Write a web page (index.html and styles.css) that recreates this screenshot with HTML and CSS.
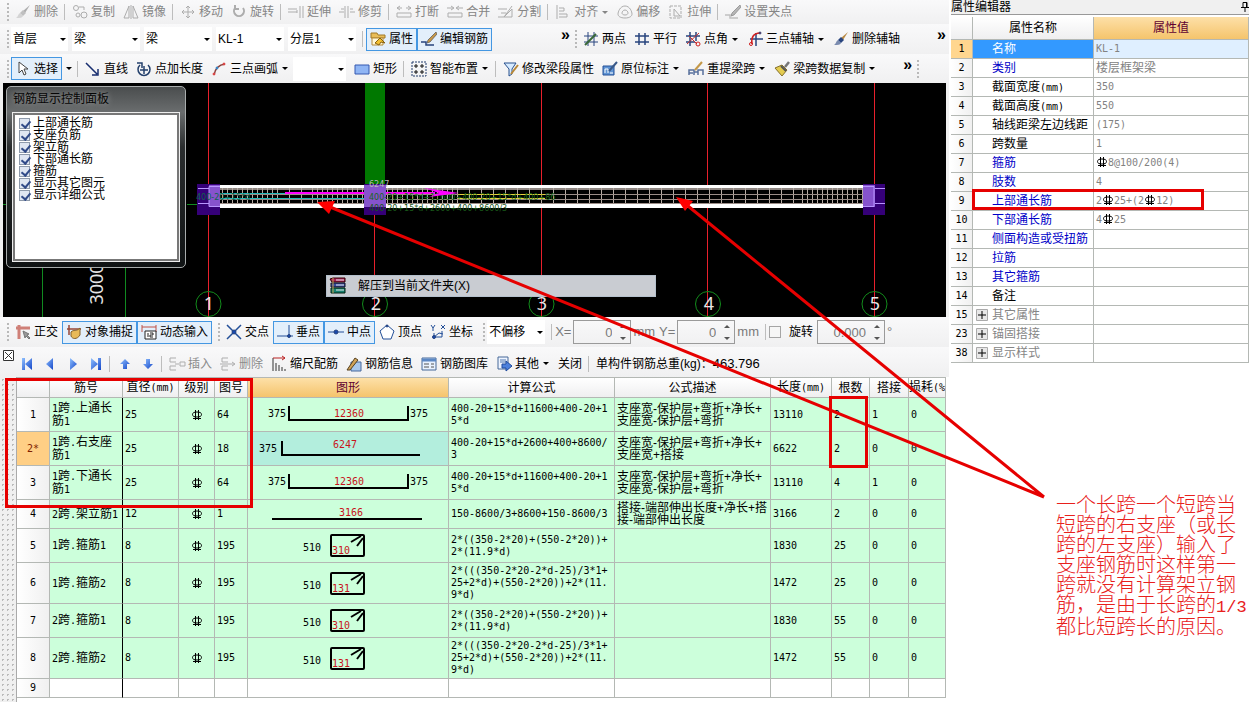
FILE: index.html
```html
<!DOCTYPE html>
<html lang="zh-CN">
<head>
<meta charset="utf-8">
<title>钢筋编辑</title>
<link rel="stylesheet" href="styles.css">
</head>
<body>
<svg class="defs" aria-hidden="true">
  <defs>
    <linearGradient id="blue" x1="0" y1="0" x2="1" y2="1"><stop offset="0" stop-color="#8fc0ff"/><stop offset="1" stop-color="#1446c8"/></linearGradient>
    <symbol id="brush" viewBox="0 0 16 16"><path d="M15 1 8 7l2 2z" fill="#b98a45"/><path d="M8 6 5 9l3 3 3-3z" fill="currentColor"/><path d="M5 9c-2 1-2 4-4 5 4 0 6 0 7-2z" fill="currentColor" opacity=".6"/></symbol>
    <symbol id="pen" viewBox="0 0 16 16"><path d="M15 1 7 9l-1 3 3-1 7-8z" fill="#c89848" stroke="#555" stroke-width=".7"/><path d="M0 11h5v3h8" fill="none" stroke="currentColor" stroke-width="1.5"/></symbol>
    <symbol id="rebar" viewBox="0 0 10 10"><ellipse cx="5" cy="4.500" rx="4.500" ry="2.500" fill="none" stroke="currentColor"/><path d="M3.500 0v10M6.500 0v10M1 8.500h8" fill="none" stroke="currentColor"/></symbol>
    <symbol id="stirrup" viewBox="0 0 200 33"><rect x="83" y="6" width="33" height="21" rx="1" fill="none" stroke="#000" stroke-width="2"/><path d="m103 13 10-6M109 17l6-8" stroke="#000" stroke-width="2"/></symbol>
    <symbol id="plus" viewBox="0 0 12 12"><path d="M.5.5h11v11H.5z" fill="#e8e8e8" stroke="#aaa"/><path d="M2 6h8M6 2v8" stroke="#000"/></symbol>
  </defs>
</svg>
<div class="app">
  <main class="work">
    <div class="toolbar modify">
      <span class="grip"></span>
      <button class="tool"><svg><use href="#brush"/></svg>删除</button><i class="sep"></i>
      <button class="tool"><svg viewBox="0 0 16 16"><circle cx="4" cy="4" r="2.500"/><circle cx="6" cy="11" r="2"/><circle cx="12" cy="11" r="3"/><path d="M7 3h5v3"/></svg>复制</button>
      <button class="tool"><svg viewBox="0 0 16 16"><path d="M6 2v12H1zM10 2v12h5zM8 1v14"/></svg>镜像</button><i class="sep"></i>
      <button class="tool"><svg viewBox="0 0 16 16"><path d="M8 2v12M2 8h12M6 4l2-2 2 2M6 12l2 2 2-2M4 6 2 8l2 2M12 6l2 2-2 2"/></svg>移动</button>
      <button class="tool"><svg viewBox="0 0 16 16"><path d="M4 4a5 5 0 1 0 8 0M4 1v4h4" stroke-width="2"/></svg>旋转</button><i class="sep"></i>
      <button class="tool"><svg viewBox="0 0 16 16"><path d="M0 5h9M0 8h9M12 2v12M15 2v12M9 6v3"/></svg>延伸</button>
      <button class="tool"><svg viewBox="0 0 16 16"><path d="M0 8h5M11 8h5M6 2v12M9 2v12M2 5h3M11 5h3"/></svg>修剪</button><i class="sep"></i>
      <button class="tool"><svg viewBox="0 0 16 16"><path d="M1 4h5M10 4h5M4 2 1 4l3 2M12 2l3 2-3 2M1 9h14v4H1z"/></svg>打断</button>
      <button class="tool"><svg viewBox="0 0 16 16"><path d="M0 4h6M10 4h6M4 2l3 2-3 2M12 2 9 4l3 2M1 9h14v4H1z"/></svg>合并</button>
      <button class="tool"><svg viewBox="0 0 16 16"><path d="M0 5h9M0 13h14V5l-8 8M6 13l8-11M3 9h5"/></svg>分割</button><i class="sep"></i>
      <button class="tool"><svg viewBox="0 0 16 16"><path d="M2 1v14M4 4h5v3H4M4 10h8v3H4"/></svg>对齐<b class="drop"></b></button>
      <button class="tool"><svg viewBox="0 0 16 16"><path d="M8 2C3 2 1 8 1 10s2 4 7 4 7-2 7-4-2-8-7-8zM8 6c-2 0-3 2-3 3s1 2 3 2 3-1 3-2-1-3-3-3z"/></svg>偏移</button>
      <button class="tool"><svg viewBox="0 0 16 16"><path d="M2 2h11v12H2z" stroke-dasharray="3 1"/><path d="M6 5v7h6z"/></svg>拉伸</button><i class="sep"></i>
      <button class="tool"><svg><use href="#pen"/></svg>设置夹点</button>
    </div>

    <div class="toolbar">
      <span class="grip"></span>
      <label class="combo floor"><select aria-label="楼层"><option>首层</option></select></label>
      <label class="combo"><select aria-label="构件类别"><option>梁</option></select></label>
      <label class="combo"><select aria-label="构件类型"><option>梁</option></select></label>
      <label class="combo"><select aria-label="构件"><option>KL-1</option></select></label>
      <label class="combo"><select aria-label="分层"><option>分层1</option></select></label><i class="sep"></i>
      <button class="tool on"><svg viewBox="0 0 16 16"><path d="M1 2h6l1 2h7v3H1z" fill="#e9bd58" stroke="#a07828"/><path d="M2 7h11v7H2z" fill="#fff8d8" stroke="#b58a38"/><path d="m5 12 5-5 5 5-4-1-2 3z" fill="#f4c030" stroke="#866010"/></svg>属性</button>
      <button class="tool on"><svg><use href="#pen"/></svg>编辑钢筋</button>
      <span class="more push">»</span>
      <span class="grip"></span>
      <button class="tool"><svg viewBox="0 0 16 16"><path d="M5 1v14M11 1v14M1 5h14M1 11h14" stroke="#28447e"/><path d="m2 14 11-11" stroke="#386838" stroke-width="2"/></svg>两点</button>
      <button class="tool"><svg viewBox="0 0 16 16"><path d="M5 2v12M11 2v12M1 5h14M1 11h14" stroke="#28447e" stroke-width="1.500"/></svg>平行</button>
      <button class="tool"><svg viewBox="0 0 16 16"><path d="M5 1v14M11 1v9M1 5h14M1 11h9" stroke="#28447e" stroke-width="1.500"/><path d="M2 13 14 2M4 5l8 8" stroke="#c43030"/><circle cx="13" cy="13" r="2" stroke="#d02020"/></svg>点角<b class="drop"></b></button>
      <button class="tool"><svg viewBox="0 0 16 16"><path d="M9 2v13M3 8h13" stroke="#28447e" stroke-width="1.500"/><path d="M5 13C4 7 6 2 13 2" stroke="#d02020" stroke-width="1.500"/><circle cx="4" cy="13" r="1.500" stroke="#d02020"/><circle cx="13" cy="2" r="1" fill="#d02020"/></svg>三点辅轴<b class="drop"></b></button>
      <button class="tool"><svg class="navy"><use href="#brush"/></svg>删除辅轴</button>
      <span class="more end">»</span>
    </div>

    <div class="toolbar draw">
      <span class="grip"></span>
      <button class="tool on"><svg viewBox="0 0 16 16"><path d="M4 1v11l3-3 2 5 2-1-2-5h4z" fill="#fff" stroke="#444"/></svg>选择</button><button class="dropbtn" aria-label="选择方式"><b class="drop"></b></button><i class="sep"></i>
      <button class="tool"><svg viewBox="0 0 16 16"><path d="m1 2 11 11M13 8v6H7" stroke="#182e70" stroke-width="1.500"/></svg>直线</button>
      <button class="tool"><svg viewBox="0 0 16 16"><path d="M4 4a6 6 0 1 0 8 0M1 2h5v5M8 5v8M4 9h8" stroke="#24406c" stroke-width="1.500"/></svg>点加长度</button>
      <button class="tool"><svg viewBox="0 0 16 16"><path d="M3 14C4 8 7 4 14 3" stroke="#88403c" stroke-width="1.500"/><circle cx="3" cy="13" r="1" fill="#d44" stroke="#d44"/><circle cx="6" cy="7" r="1" fill="#38c" stroke="#38c"/><circle cx="13" cy="3" r="1" fill="#d44" stroke="#d44"/></svg>三点画弧<b class="drop"></b></button>
      <label class="combo small"><select aria-label="画弧参数"><option></option></select></label>
      <button class="tool"><svg viewBox="0 0 16 16"><path d="M1 4h14v9H1z" fill="#8fb5f4" stroke="#3458b0"/></svg>矩形</button><i class="sep"></i>
      <button class="tool"><svg viewBox="0 0 16 16"><path d="M1 1h14v14H1z" stroke="#223c6c" stroke-dasharray="2 1"/><path d="M5 3v4M3 5h4M11 3v4M9 5h4M5 9v4M3 11h4M11 9v4M9 11h4" stroke="#111"/></svg>智能布置<b class="drop"></b></button><i class="sep"></i>
      <button class="tool"><svg viewBox="0 0 16 16"><path d="M1 2h12L9 8v5l-3 2V8z" fill="#d7ebff" stroke="#28508c"/><path d="m15 4-7 9" stroke="#b88838" stroke-width="2"/></svg>修改梁段属性</button>
      <button class="tool"><svg viewBox="0 0 16 16"><path d="M1 5h11v9H1z" fill="#5f94d4" stroke="#245098"/><path d="M3 12V8h3v4M8 12h3" stroke="#fff"/><path d="m15 1-8 9" stroke="#385888" stroke-width="2"/></svg>原位标注<b class="drop"></b></button>
      <button class="tool"><svg viewBox="0 0 16 16"><path d="M1 14V9h5v5M6 11h4M10 14V9h5v5M1 12h4" stroke="#58709c" stroke-width="1.500"/><path d="m14 1-7 8" stroke="#c49848" stroke-width="2"/></svg>重提梁跨<b class="drop"></b></button>
      <button class="tool"><svg viewBox="0 0 16 16"><path d="m15 1-4 5" stroke="#777" stroke-width="2.500"/><path d="m1 7 7-3 5 5-5 6z" fill="#e4cc50" stroke="#85702c"/><path d="m7 5 5 5" stroke="#555" stroke-width="2"/></svg>梁跨数据复制<b class="drop"></b></button>
      <span class="more late">»</span>
      <span class="grip"></span>
    </div>

    <section class="canvas" aria-label="绘图区">
      <svg class="drawing" viewBox="3 83 943 234" width="943" height="234">
        <defs>
          <pattern id="dense" width="5" height="30" patternUnits="userSpaceOnUse"><path d="M2.500 0v30" stroke="#b5aaa2"/></pattern>
          <pattern id="wide" width="12" height="30" patternUnits="userSpaceOnUse"><path d="M1.500 0v30" stroke="#b5aaa2"/></pattern>
        </defs>
        <path d="M42.500 262v55M125.500 262v55M187 204.500h10M3 204.500h4" stroke="#108a20"/>
        <path d="M365 83h20v102h-20z" fill="#007800"/>
        <path d="M208.500 83v234M374.500 214v103M541.500 83v234M707.500 83v234M874.500 83v234" stroke="#e8202c"/>
        <path d="M220 185h643v23H220z" fill="#fff"/>
        <path d="M220 188h643v16H220z" fill="#000"/>
        <path d="M220 188h643v2H220z" fill="#8f8682"/>
        <path d="M220 188h55v16h-55zM312 188h150v16H312zM798 188h65v16h-65z" fill="url(#dense)"/>
        <path d="M275 188h37v16h-37zM462 188h336v16H462z" fill="url(#wide)"/>
        <path d="M220 194.500h643M220 199.500h643M220 203.500h643" stroke="#9b8d88"/>
        <path d="M220 193.500h145M220 198.500h145" stroke="#20b8b8"/>
        <path d="M458 194.500h87M458 198.500h87" stroke="#e5d43a"/>
        <path d="M285 193h150" stroke="#f0f" stroke-width="2"/>
        <path d="M197 184h23v31h-23zM364 184h22v31h-22zM863 184h22v31h-22z" fill="#350078"/>
        <path d="M209 185h11v22h-11zM364 185h22v22h-22zM863 185h12v22h-12z" fill="#9461dc" opacity=".85"/>
        <path d="M198 188.500h11M198 203.500h11M220 186.500h-11v20h11M863 186.500h11v20h-11M875 188.500h10M875 203.500h10" fill="none" stroke="#b895ff"/>
        <g class="tiny">
          <text x="196" y="200" fill="#0c644c">400-20+15*d</text>
          <text x="369" y="187" fill="#b8b8b8">6247</text>
          <text x="369" y="200" fill="#176717">400-20+15*d+11600+400-20+15*d+400+86</text>
          <text x="369" y="211" fill="#185818">400-20+15*d+2600+400+8600/3</text>
        </g>
        <path d="m424 188 35 5-30 4 10-4z" fill="#f0f"/>
        <g fill="none" stroke="#138c1c"><circle cx="208.500" cy="304" r="12.500"/><circle cx="375" cy="304" r="12.500"/><circle cx="541.500" cy="304" r="12.500"/><circle cx="708" cy="304" r="12.500"/><circle cx="874.500" cy="304" r="12.500"/></g>
        <g class="axis"><text x="209" y="310">1</text><text x="376" y="310">2</text><text x="542" y="310">3</text><text x="709" y="310">4</text><text x="875" y="310">5</text>
        <text transform="rotate(-90 103 304)" x="123" y="304">3000</text></g>
        <path d="M55 265h50" stroke="#9b1520" stroke-width="4"/><path d="M52 265h12" stroke="#2669a8" stroke-width="4"/>
      </svg>
      <aside class="panel">
        <h2>钢筋显示控制面板</h2>
        <div class="checks">
          <label><input type="checkbox" checked>上部通长筋</label>
          <label><input type="checkbox" checked>支座负筋</label>
          <label><input type="checkbox" checked>架立筋</label>
          <label><input type="checkbox" checked>下部通长筋</label>
          <label><input type="checkbox" checked>箍筋</label>
          <label><input type="checkbox" checked>显示其它图元</label>
          <label><input type="checkbox" checked>显示详细公式</label>
        </div>
      </aside>
      <button class="menu-item"><svg viewBox="0 0 18 18"><path d="m1 2 3-1h12v4H3z" fill="#a51c58" stroke="#300"/><path d="M2 6h14v4H2z" fill="#354a9c" stroke="#112"/><path d="M2 11h14v5H2z" fill="#178070" stroke="#021"/><path d="M7 3h8M7 8h8M7 13h8" stroke="#eee"/><path d="M4 1v15" stroke="#c2a050"/></svg>解压到当前文件夹(X)</button>
    </section>

    <div class="toolbar snap">
      <span class="grip"></span>
      <button class="tool"><svg viewBox="0 0 16 16"><path d="M4 1v14M1 4h14" stroke="#cf8078" stroke-width="3"/><path d="m8 7 2 7 1-2 3 3 1-1-3-3 2-1z" fill="#999" stroke="#777"/></svg>正交</button>
      <button class="tool on"><svg viewBox="0 0 16 16"><path d="M3 1v10M1 5h14" stroke="#994838" stroke-width="1.500"/><path d="M5 8c3-3 5 0 9-4v7c-3 5-8 4-9 1z" fill="#e8ba58" stroke="#83602c"/></svg>对象捕捉</button>
      <button class="tool on"><svg viewBox="0 0 16 16"><path d="M1 1v7M15 1v7M1 3h14" stroke="#c05044"/><path d="M4 7h11v8H4z" fill="#fff" stroke="#222"/><path d="M7 9v4M9 9h3v2H9v2h3" stroke="#222"/></svg>动态输入</button>
      <span class="grip apart"></span>
      <button class="tool"><svg viewBox="0 0 16 16"><path d="m1 1 14 14M15 1 1 15" stroke="#234f98" stroke-width="1.500"/><circle cx="8" cy="8" r="2" fill="#1648b0"/></svg>交点</button>
      <button class="tool on"><svg viewBox="0 0 16 16"><path d="M0 12h16M12 1v11" stroke="#234f98"/><circle cx="12" cy="12" r="1.500" fill="#1648b0"/></svg>垂点</button>
      <button class="tool on"><svg viewBox="0 0 16 16"><path d="M0 8h16" stroke="#234f98"/><circle cx="8" cy="8" r="2" fill="#1648b0"/></svg>中点</button>
      <button class="tool"><svg viewBox="0 0 16 16"><path d="m8 1 7 6-3 8H4L1 7z" fill="#fff" stroke="#234f98"/><circle cx="8" cy="2" r="1" fill="#1648b0"/></svg>顶点</button>
      <button class="tool"><svg viewBox="0 0 16 16"><path d="m1 1 2 3 2-3M3 4v3M11 1l4 4M15 1l-4 4M4 9v4h8V7M4 13l5-4 4 1" stroke="#234f98"/><circle cx="4" cy="13" r="1.500" fill="#1648b0"/></svg>坐标</button>
      <span class="grip apart"></span>
      <label class="combo offset"><select aria-label="偏移方式"><option>不偏移</option></select></label><i class="sep"></i>
      <label class="field">X=<span class="spin"><input value="0"></span>mm</label>
      <label class="field">Y=<span class="spin"><input value="0"></span>mm</label><i class="sep"></i>
      <label class="turn"><input type="checkbox">旋转</label>
      <label class="field"><span class="spin angle"><input value="0.000" aria-label="旋转角度"></span>°</label>
    </div>

    <div class="toolbar nav">
      <button class="close" aria-label="关闭面板"><svg viewBox="0 0 11 11"><path d="M.5.5h10v10H.5zM2 2l7 7M9 2 2 9" fill="#fff" stroke="#333"/></svg></button>
      <button class="step" aria-label="首条"><svg viewBox="0 0 12 12"><path d="M1 0h3v12H1zM11 0v12L4 6z" fill="url(#blue)"/></svg></button>
      <button class="step" aria-label="上一条"><svg viewBox="0 0 12 12"><path d="M9 0v12L2 6z" fill="url(#blue)"/></svg></button>
      <button class="step" aria-label="下一条"><svg viewBox="0 0 12 12"><path d="M3 0v12l7-6z" fill="url(#blue)"/></svg></button>
      <button class="step" aria-label="末条"><svg viewBox="0 0 12 12"><path d="M11 0H8v12h3zM1 0v12l7-6z" fill="url(#blue)"/></svg></button><i class="sep"></i>
      <button class="step" aria-label="上移"><svg viewBox="0 0 12 12"><path d="m6 1 5 5H8v5H4V6H1z" fill="url(#blue)"/></svg></button>
      <button class="step" aria-label="下移"><svg viewBox="0 0 12 12"><path d="m6 11 5-5H8V1H4v5H1z" fill="url(#blue)"/></svg></button><i class="sep"></i>
      <button class="tool off"><svg viewBox="0 0 16 16"><path d="M7 2H1v4h6M7 14H1v-4h6M6 8h4M11 6h5v4h-5z"/></svg>插入</button>
      <button class="tool off"><svg viewBox="0 0 16 16"><path d="M8 2H2v4h6M8 14H2v-4h6M0 8h14M12 6l3 2-3 2"/></svg>删除</button>
      <button class="tool"><svg viewBox="0 0 16 16"><path d="M2 2v13M5 7v8M8 9v6M11 11v4M14 13v2" stroke="#333"/><path d="M2 2h12M11 0l3 2-3 2" stroke="#b22"/></svg>缩尺配筋</button>
      <button class="tool"><svg viewBox="0 0 16 16"><path d="M5 6h10v9H5z" fill="#a9c8ed" stroke="#47689c"/><path d="m1 14 8-12 3 2-8 10z" fill="#d0a358" stroke="#554020"/></svg>钢筋信息</button>
      <button class="tool"><svg viewBox="0 0 16 16"><path d="M1 2h14v12H1z" fill="#e8f2ff" stroke="#466898"/><path d="M1 4h14" stroke="#5c88c4" stroke-width="3"/><path d="M3 8h5M3 11h5M10 8h3M10 11h3" stroke="#555"/></svg>钢筋图库</button>
      <button class="tool"><svg viewBox="0 0 16 16"><path d="M2 1h10v12H2z" fill="#eef4ff" stroke="#466898"/><path d="M4 4h6M4 6h6" stroke="#5078b0"/><path d="M6 8h4V5l6 5-6 5v-3H6z" fill="#4c80dc" stroke="#204c9c"/></svg>其他<b class="drop"></b></button>
      <button class="tool">关闭</button><i class="sep"></i>
      <span class="total">单构件钢筋总重(kg)：<span>463.796</span></span>
    </div>

    <div class="sheet">
      <div class="handle"></div>
      <table class="bars">
        <colgroup><col class="w33"><col class="w73"><col class="w56"><col class="w36"><col class="w33"><col class="w201"><col class="w166"><col class="w156"><col class="w61"><col class="w38"><col class="w39"><col></colgroup>
        <thead><tr><th></th><th>筋号</th><th>直径<span class="m">(mm)</span></th><th>级别</th><th>图号</th><th class="hot">图形</th><th>计算公式</th><th>公式描述</th><th>长度<span class="m">(mm)</span></th><th>根数</th><th>搭接</th><th class="cut">损耗<span class="m">(%)</span></th></tr></thead>
        <tbody>
          <tr class="r34"><th>1</th><td><span class="m">1</span>跨<span class="m">.</span>上通长<br>筋<span class="m">1</span></td><td class="m">25</td><td class="c"><svg class="rb"><use href="#rebar"/></svg></td><td class="m">64</td><td class="shape"><svg viewBox="0 0 200 33"><path d="M41 8v14h119V8"/><text x="20" y="19">375</text><text class="red" x="86" y="19">12360</text><text x="162" y="19">375</text></svg></td><td class="m">400-20+15*d+11600+400-20+1<br>5*d</td><td>支座宽-保护层+弯折+净长+<br>支座宽-保护层+弯折</td><td class="m">13110</td><td class="m">2</td><td class="m">1</td><td class="m">0</td></tr>
          <tr class="r34 current"><th>2*</th><td><span class="m">1</span>跨<span class="m">.</span>右支座<br>筋<span class="m">1</span></td><td class="m">25</td><td class="c"><svg class="rb"><use href="#rebar"/></svg></td><td class="m">18</td><td class="shape"><svg viewBox="0 0 200 33"><path d="M34 9v14h138"/><text x="11" y="20">375</text><text class="red" x="85" y="16">6247</text></svg></td><td class="m">400-20+15*d+2600+400+8600/<br>3</td><td>支座宽-保护层+弯折+净长+<br>支座宽+搭接</td><td class="m">6622</td><td class="m">2</td><td class="m">0</td><td class="m">0</td></tr>
          <tr class="r34"><th>3</th><td><span class="m">1</span>跨<span class="m">.</span>下通长<br>筋<span class="m">1</span></td><td class="m">25</td><td class="c"><svg class="rb"><use href="#rebar"/></svg></td><td class="m">64</td><td class="shape"><svg viewBox="0 0 200 33"><path d="M41 8v14h119V8"/><text x="20" y="19">375</text><text class="red" x="86" y="19">12360</text><text x="162" y="19">375</text></svg></td><td class="m">400-20+15*d+11600+400-20+1<br>5*d</td><td>支座宽-保护层+弯折+净长+<br>支座宽-保护层+弯折</td><td class="m">13110</td><td class="m">4</td><td class="m">1</td><td class="m">0</td></tr>
          <tr class="r29"><th>4</th><td><span class="m">2</span>跨<span class="m">.</span>架立筋<span class="m">1</span></td><td class="m">12</td><td class="c"><svg class="rb"><use href="#rebar"/></svg></td><td class="m">1</td><td class="shape"><svg class="low" viewBox="0 0 200 28"><path d="M24 19h150"/><text class="red" x="91" y="16">3166</text></svg></td><td class="m">150-8600/3+8600+150-8600/3</td><td>搭接-端部伸出长度+净长+搭<br>接-端部伸出长度</td><td class="m">3166</td><td class="m">2</td><td class="m">0</td><td class="m">0</td></tr>
          <tr class="r34"><th>5</th><td><span class="m">1</span>跨<span class="m">.</span>箍筋<span class="m">1</span></td><td class="m">8</td><td class="c"><svg class="rb"><use href="#rebar"/></svg></td><td class="m">195</td><td class="shape"><svg viewBox="0 0 200 33"><use href="#stirrup"/><text x="55" y="22">510</text><text class="red" x="84" y="25">310</text></svg></td><td class="m">2*((350-2*20)+(550-2*20))+<br>2*(11.9*d)</td><td></td><td class="m">1830</td><td class="m">25</td><td class="m">0</td><td class="m">0</td></tr>
          <tr class="r41"><th>6</th><td><span class="m">1</span>跨<span class="m">.</span>箍筋<span class="m">2</span></td><td class="m">8</td><td class="c"><svg class="rb"><use href="#rebar"/></svg></td><td class="m">195</td><td class="shape"><svg viewBox="0 0 200 33"><use href="#stirrup"/><text x="55" y="22">510</text><text class="red" x="84" y="25">131</text></svg></td><td class="m">2*(((350-2*20-2*d-25)/3*1+<br>25+2*d)+(550-2*20))+2*(11.<br>9*d)</td><td></td><td class="m">1472</td><td class="m">25</td><td class="m">0</td><td class="m">0</td></tr>
          <tr class="r34"><th>7</th><td><span class="m">2</span>跨<span class="m">.</span>箍筋<span class="m">1</span></td><td class="m">8</td><td class="c"><svg class="rb"><use href="#rebar"/></svg></td><td class="m">195</td><td class="shape"><svg viewBox="0 0 200 33"><use href="#stirrup"/><text x="55" y="22">510</text><text class="red" x="84" y="25">310</text></svg></td><td class="m">2*((350-2*20)+(550-2*20))+<br>2*(11.9*d)</td><td></td><td class="m">1830</td><td class="m">55</td><td class="m">0</td><td class="m">0</td></tr>
          <tr class="r41"><th>8</th><td><span class="m">2</span>跨<span class="m">.</span>箍筋<span class="m">2</span></td><td class="m">8</td><td class="c"><svg class="rb"><use href="#rebar"/></svg></td><td class="m">195</td><td class="shape"><svg viewBox="0 0 200 33"><use href="#stirrup"/><text x="55" y="22">510</text><text class="red" x="84" y="25">131</text></svg></td><td class="m">2*(((350-2*20-2*d-25)/3*1+<br>25+2*d)+(550-2*20))+2*(11.<br>9*d)</td><td></td><td class="m">1472</td><td class="m">55</td><td class="m">0</td><td class="m">0</td></tr>
          <tr class="r19 blank"><th>9</th><td></td><td></td><td></td><td></td><td></td><td></td><td></td><td></td><td></td><td></td><td></td></tr>
        </tbody>
      </table>
    </div>
  </main>

  <aside class="props">
    <header><h2>属性编辑器</h2><svg viewBox="0 0 8 10"><path d="M2 .5h4v5H2zM0 5.500h8M4 6v4M5.500 1v4" fill="none" stroke="#000"/></svg></header>
    <table class="attrs">
      <colgroup><col class="w22"><col class="w121"><col></colgroup>
      <thead><tr><th></th><th>属性名称</th><th class="hot">属性值</th></tr></thead>
      <tbody>
        <tr class="picked"><th>1</th><td>名称</td><td class="m">KL-1</td></tr>
        <tr class="key"><th>2</th><td>类别</td><td>楼层框架梁</td></tr>
        <tr><th>3</th><td>截面宽度<span class="m">(mm)</span></td><td class="m">350</td></tr>
        <tr><th>4</th><td>截面高度<span class="m">(mm)</span></td><td class="m">550</td></tr>
        <tr><th>5</th><td>轴线距梁左边线距</td><td class="m">(175)</td></tr>
        <tr><th>6</th><td>跨数量</td><td class="m">1</td></tr>
        <tr class="key"><th>7</th><td>箍筋</td><td class="m"><svg class="rb"><use href="#rebar"/></svg>8@100/200(4)</td></tr>
        <tr class="key"><th>8</th><td>肢数</td><td class="m">4</td></tr>
        <tr class="key"><th>9</th><td>上部通长筋</td><td class="m">2<svg class="rb"><use href="#rebar"/></svg>25+(2<svg class="rb"><use href="#rebar"/></svg>12)</td></tr>
        <tr class="key"><th>10</th><td>下部通长筋</td><td class="m">4<svg class="rb"><use href="#rebar"/></svg>25</td></tr>
        <tr class="key"><th>11</th><td>侧面构造或受扭筋</td><td></td></tr>
        <tr class="key"><th>12</th><td>拉筋</td><td></td></tr>
        <tr class="key"><th>13</th><td>其它箍筋</td><td></td></tr>
        <tr><th>14</th><td>备注</td><td></td></tr>
        <tr class="group"><th>15</th><td><button aria-label="展开"><svg><use href="#plus"/></svg></button>其它属性</td><td></td></tr>
        <tr class="group"><th>23</th><td><button aria-label="展开"><svg><use href="#plus"/></svg></button>锚固搭接</td><td></td></tr>
        <tr class="group"><th>38</th><td><button aria-label="展开"><svg><use href="#plus"/></svg></button>显示样式</td><td></td></tr>
      </tbody>
    </table>
  </aside>

  <svg class="marks" width="1249" height="702" viewBox="0 0 1249 702" aria-hidden="true">
    <g fill="none" stroke="#e60000" stroke-width="3"><path d="M6.500 379.500h245v127h-245zM830.500 397.500h36v69h-36zM973.500 190.500h229v18h-229z"/><path d="M1044 497 330 207M1044 497 688 206"/></g>
    <path d="m317 202 18-1-6 13zM676 197l17 4-8 10z" fill="#f00"/>
  </svg>
  <p class="note">一个长跨一个短跨当<br>短跨的右支座（或长<br>跨的左支座）输入了<br>支座钢筋时这样第一<br>跨就没有计算架立钢<br>筋，是由于长跨的<span>1/3</span><br>都比短跨长的原因。</p>
</div>
</body>
</html>
```

FILE: styles.css
```css
* { box-sizing: border-box; }
body {
  margin: 0;
  background: #f0f0f0;
  color: #000;
  font: 12px/16px "Liberation Sans", "Noto Sans CJK SC", sans-serif;
}
button, input, select { font: inherit; color: inherit; margin: 0; }
button { border: 0; padding: 0; background: none; }
h2 { margin: 0; font-weight: 400; }
.defs { position: absolute; width: 0; height: 0; }
.app { position: relative; display: flex; min-height: 100vh; overflow: hidden; }
.work { flex: 1; min-width: 0; display: flex; flex-direction: column; }

/* toolbars */
.toolbar {
  display: flex;
  align-items: center;
  height: 30px;
  padding-left: 7px;
  background: linear-gradient(#f9f9fa, #f0f0f1);
  white-space: nowrap;
  overflow: hidden;
}
.toolbar > * { flex: none; }
.modify { height: 24px; color: #858585; }
.draw { height: 29px; }
.grip {
  width: 3px;
  height: 18px;
  margin-right: 1px;
  background: repeating-linear-gradient(#b9b9b9 0 2px, transparent 2px 4px);
  background-size: 2px 100%;
  background-repeat: no-repeat;
}
.grip.apart { margin-left: 6px; }
.sep { width: 2px; height: 16px; margin: 0 2px; border-left: 1px solid #bdbdbd; }
.tool {
  display: flex;
  align-items: center;
  gap: 3px;
  height: 23px;
  padding: 0 4px;
}
.tool svg {
  width: 16px;
  height: 16px;
  color: #28447e;
  fill: none;
  stroke: #28447e;
  overflow: visible;
}
.tool svg use { stroke: none; }
.modify svg, .off svg { color: #aaa; stroke: #adadad; }
.modify svg use { filter: grayscale(1); opacity: .7; }
.off { color: #8b8b8b; }
.on { background: #e3effb; box-shadow: inset 0 0 0 1px #4497e2; }
.drop {
  width: 0;
  height: 0;
  margin: 0 1px;
  border: 3px solid transparent;
  border-top-color: currentColor;
  border-bottom: 0;
}
.dropbtn { width: 13px; height: 20px; }
.dropbtn .drop { display: block; margin: 0 auto; }
.more { font: 700 16px/16px "Liberation Sans", sans-serif; height: 24px; }
.push { margin-left: 69px; margin-right: 5px; }
.end { margin-left: 33px; }
.late { margin-left: 23px; margin-right: 5px; }
.combo { position: relative; width: 68px; height: 24px; margin-right: 4px; background: #fff; }
.combo select {
  width: 100%;
  height: 100%;
  padding: 0 0 0 2px;
  border: 0;
  appearance: none;
  background: none;
}
.combo::after {
  content: "";
  position: absolute;
  right: 2px;
  top: 11px;
  border: 3px solid transparent;
  border-top-color: #000;
  border-bottom: 0;
}
.floor { width: 57px; }
.small { width: 53px; }
.offset { width: 58px; }
.field { display: flex; align-items: center; gap: 2px; margin-right: 4px; color: #7a7a7a; font-size: 13px; }
.spin { position: relative; width: 58px; height: 24px; border: 1px solid #9a9a9a; }
.spin input {
  width: 100%;
  height: 100%;
  padding: 0 18px 0 0;
  border: 0;
  background: none;
  text-align: right;
}
.spin::before, .spin::after {
  content: "";
  position: absolute;
  right: 4px;
  border: 3px solid transparent;
}
.spin::before { top: 4px; border-bottom-color: #555; border-top: 0; }
.spin::after { bottom: 3px; border-top-color: #555; border-bottom: 0; }
.angle { width: 68px; }
.turn { display: flex; align-items: center; gap: 8px; margin-right: 4px; }
.turn input {
  width: 12px;
  height: 12px;
  appearance: none;
  border: 1px solid #a5a5a5;
  background: #f6f6f6;
}
.nav { padding: 3px 0 0 3px; }
.close { width: 12px; align-self: flex-start; }
.close svg { display: block; width: 11px; height: 11px; }
.step { width: 23px; height: 20px; }
.step svg { display: block; width: 12px; height: 12px; margin: 0 auto; }
.total { padding-left: 4px; }
.total span { font-size: 13px; }

/* drawing area */
.canvas { position: relative; height: 234px; margin: 0 3px; background: #000; overflow: hidden; }
.drawing { display: block; }
.axis { fill: #e6e6e6; font: 18px "Noto Sans", sans-serif; text-anchor: middle; }
.tiny { font: 8px "DejaVu Sans", sans-serif; }
.panel {
  position: absolute;
  left: 3px;
  top: 3px;
  width: 180px;
  padding: 4px 6px 6px;
  border: 1px solid #a8acac;
  border-radius: 5px;
  background: linear-gradient(#4a4d4e, #6a6d6e 25px, #2a2d2e 60px, #101314);
}
.panel h2 { font-size: 12px; line-height: 16px; padding-bottom: 6px; color: #050505; text-shadow: 0 0 6px #aaa; }
.checks { height: 148px; padding: 2px 4px; border: 2px solid #777; outline: 1px solid #eee; background: #fff; }
.checks label { display: flex; align-items: center; gap: 3px; height: 12px; line-height: 12px; }
.checks input {
  width: 11px;
  height: 11px;
  appearance: none;
  border: 1px solid #8e9aab;
  background: #dfe6f2;
}
.checks input:checked::before {
  content: "";
  display: block;
  width: 4px;
  height: 7px;
  margin-left: 3px;
  border: solid #304a88;
  border-width: 0 2px 2px 0;
  transform: rotate(40deg);
}
.menu-item {
  position: absolute;
  left: 323px;
  top: 192px;
  display: flex;
  align-items: center;
  gap: 11px;
  width: 330px;
  height: 22px;
  padding-left: 2px;
  border: 1px solid #b4c0cc;
  background: #c9ccd2;
}
.menu-item svg { width: 18px; height: 18px; }

/* rebar sheet */
.sheet { flex: 1; display: flex; padding-right: 3px; background: #fff; }
.handle {
  flex: none;
  width: 17px;
  border-right: 1px solid #aaa;
  background: radial-gradient(circle, #bbb 1px, #f0f0f0 1px) 5px 0 / 5px 5px;
}
table { border-collapse: separate; border-spacing: 0; table-layout: fixed; width: 100%; }
th, td {
  padding: 0 2px;
  border-right: 1px solid #b4b8b4;
  border-bottom: 1px solid #b4b8b4;
  line-height: 12px;
  font-weight: 400;
  text-align: left;
  white-space: nowrap;
}
th { text-align: center; padding: 0; background: linear-gradient(#fff, #efeff0); }
tbody th { font: 10px/12px "DejaVu Sans Mono", monospace; background: linear-gradient(90deg, #fff, #f0f0f0); }
.m { font-family: "DejaVu Sans Mono", "Noto Sans CJK SC", monospace; font-size: 10px; }
.hot { background: linear-gradient(#fde0a8, #f5c46c); color: #600030; }
.cut { overflow: hidden; text-align: left; }
.bars { align-self: flex-start; border-top: 1px solid #b4b8b4; }
.bars thead tr { height: 20px; }
.bars td { background: #ccffdb; white-space: normal; overflow: hidden; }
.bars tbody tr > :nth-child(2) { border-right-color: #000; }
.bars td.c { text-align: center; padding: 0; }
.bars td.shape { padding: 0; }
.shape svg { display: block; width: 200px; height: 33px; }
.shape svg.low { height: 28px; }
.shape path { fill: none; stroke: #000; stroke-width: 2; }
.shape text { font: 10px "DejaVu Sans Mono", monospace; }
.shape .red { fill: #c8141c; }
.bars .current th { background: #ffcf85; color: #802000; }
.bars .current .shape { background: #b3eedd; }
.bars .blank td { background: #fff; }
.rb { width: 10px; height: 10px; color: #000; vertical-align: -1px; margin: 0 1px; }
.r34 { height: 34px; }
.r29 { height: 29px; }
.r41 { height: 41px; }
.r19 { height: 19px; }
.w22 { width: 22px; }
.w33 { width: 33px; }
.w36 { width: 36px; }
.w38 { width: 38px; }
.w39 { width: 39px; }
.w56 { width: 56px; }
.w61 { width: 61px; }
.w73 { width: 73px; }
.w121 { width: 121px; }
.w156 { width: 156px; }
.w166 { width: 166px; }
.w201 { width: 201px; }

/* property editor */
.props { flex: none; width: 300px; padding-left: 2px; background: #fff; }
.props header {
  display: flex;
  align-items: center;
  justify-content: space-between;
  height: 15px;
  border-bottom: 1px solid #999;
  background: #f0f0f0;
}
.props h2 { font-size: 12px; line-height: 14px; }
.props header svg { width: 8px; height: 10px; }
.attrs { padding-top: 2px; }
.attrs thead tr { height: 23px; }
.attrs tbody tr { height: 19px; }
.attrs td { color: #828282; }
.attrs td:nth-child(2) { position: relative; padding-left: 19px; color: #000; }
.attrs .key td:nth-child(2) { color: #0000c8; }
.attrs .group td:nth-child(2) { color: #858585; }
.attrs .picked th { background: #ffd68f; }
.attrs .picked td:nth-child(2) { background: #3399ff; color: #fff; }
.attrs .picked td:nth-child(3) { background: #dfefff; }
.attrs button { position: absolute; left: 3px; top: 3px; }
.attrs button svg { display: block; width: 12px; height: 12px; }

/* review marks */
.marks { position: absolute; left: 0; top: 0; pointer-events: none; }
.note {
  position: absolute;
  left: 1056px;
  top: 494px;
  margin: 0;
  color: #e8201c;
  font: 300 20px/20px "Noto Sans CJK SC", sans-serif;
  white-space: nowrap;
}
.note span { font-family: "Liberation Mono", monospace; font-size: 17px; line-height: 16px; }
```
